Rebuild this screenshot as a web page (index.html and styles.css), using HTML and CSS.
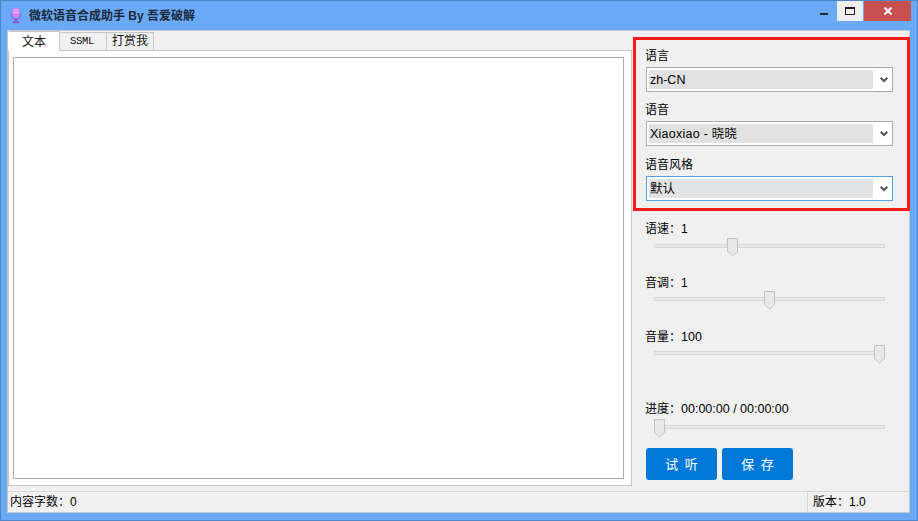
FILE: index.html
```html
<!DOCTYPE html>
<html lang="zh-CN">
<head>
<meta charset="utf-8">
<title>微软语音合成助手</title>
<link rel="stylesheet" href="styles.css">
</head>
<body>
<div class="window">
  <header class="titlebar">
    <svg class="app-icon" width="12" height="17" viewBox="0 0 14 20">
      <rect x="3" y="1" width="8" height="11" rx="4" fill="#e07ff0"/>
      <rect x="4" y="3" width="6" height="1" fill="#f6d8fa"/>
      <rect x="4" y="6" width="6" height="1" fill="#f6d8fa"/>
      <path d="M1.500 8v1a5.500 5.500 0 0 0 11 0V8" fill="none" stroke="#a855d8" stroke-width="1.300"/>
      <rect x="6" y="14" width="2" height="3" fill="#8a4fc0"/>
      <rect x="3" y="17" width="8" height="2" fill="#8a4fc0"/>
    </svg>
    <span class="title">微软语音合成助手 By 吾爱破解</span>
    <div class="caption">
      <div class="cap cap-min"><i></i></div>
      <div class="cap cap-max"><i></i></div>
      <div class="cap cap-close">
        <svg width="8" height="8" viewBox="0 0 8 8"><path d="M0.500 0.500L7.500 7.500M7.500 0.500L0.500 7.500" stroke="#fff" stroke-width="2"/></svg>
      </div>
    </div>
  </header>
  <div class="client">
    <div class="main">
      <section class="left">
        <div class="tabs">
          <div class="tab active">文本</div>
          <div class="tab mono">SSML</div>
          <div class="tab reward">打赏我</div>
        </div>
        <div class="tab-page"><div class="textbox"></div></div>
      </section>
      <aside class="right">
        <div class="group">
          <label class="lbl">语言</label>
          <div class="combo"><span class="val">zh-CN</span><svg class="chev" width="8" height="6" viewBox="0 0 8 6"><path d="M.7.700L4 4l3.300-3.300" fill="none" stroke="#555" stroke-width="2"/></svg></div>
          <label class="lbl second">语音</label>
          <div class="combo"><span class="val wide">Xiaoxiao - 晓晓</span><svg class="chev" width="8" height="6" viewBox="0 0 8 6"><path d="M.7.700L4 4l3.300-3.300" fill="none" stroke="#555" stroke-width="2"/></svg></div>
          <label class="lbl second third">语音风格</label>
          <div class="combo focus"><span class="val">默认</span><svg class="chev" width="8" height="6" viewBox="0 0 8 6"><path d="M.7.700L4 4l3.300-3.300" fill="none" stroke="#555" stroke-width="2"/></svg></div>
        </div>
        <div class="sliders">
          <div class="field f1"><div class="lbl">语速：1</div><div class="slider"><div class="thumb" style="left:72px"><svg width="12" height="19" viewBox="0 0 12 19"><path d="M.5.5h10v13l-5 4.500-5-4.500z" fill="#e8e8e8" stroke="#c2c2c2"/></svg></div></div></div>
          <div class="field f2"><div class="lbl">音调：1</div><div class="slider"><div class="thumb" style="left:109px"><svg width="12" height="19" viewBox="0 0 12 19"><path d="M.5.5h10v13l-5 4.500-5-4.500z" fill="#e8e8e8" stroke="#c2c2c2"/></svg></div></div></div>
          <div class="field f3"><div class="lbl">音量：<span class="num">100</span></div><div class="slider"><div class="thumb" style="left:219px"><svg width="12" height="19" viewBox="0 0 12 19"><path d="M.5.5h10v13l-5 4.500-5-4.500z" fill="#e8e8e8" stroke="#c2c2c2"/></svg></div></div></div>
          <div class="field f4"><div class="lbl">进度：<span class="num">00:00:00 / 00:00:00</span></div><div class="slider"><div class="thumb" style="left:-1px"><svg width="12" height="19" viewBox="0 0 12 19"><path d="M.5.5h10v13l-5 4.500-5-4.500z" fill="#e8e8e8" stroke="#c2c2c2"/></svg></div></div></div>
        </div>
        <div class="buttons">
          <button class="btn">试 听</button>
          <button class="btn">保 存</button>
        </div>
      </aside>
    </div>
    <footer class="status">
      <span class="count">内容字数：0</span>
      <span class="version">版本：1.0</span>
    </footer>
  </div>
</div>
</body>
</html>
```
FILE: styles.css
```css
* { box-sizing: border-box; }
html, body { margin: 0; padding: 0; }
body {
  width: 918px; height: 521px; overflow: hidden;
  font-family: "Liberation Sans", "Noto Sans CJK SC", sans-serif;
  font-size: 12px; color: #000;
}
.window {
  width: 918px; height: 521px;
  background: #69a9f5;
  border: 1px solid #4f86c8;
  display: flex; flex-direction: column;
}
.titlebar {
  height: 29px; flex: none;
  display: flex; align-items: flex-start;
  padding-left: 9px;
}
.app-icon { margin-top: 6px; }
.title { margin: 7px 0 0 7px; font-size: 12px; font-weight: bold; color: #1a2a3c; line-height: 16px; }
.caption { margin-left: auto; display: flex; margin-right: 6px; }
.cap { height: 20px; display: flex; align-items: center; justify-content: center; }
.cap-min { width: 27px; }
.cap-min i { display: block; width: 8px; height: 2px; background: #1c2530; margin-top: 6px; }
.cap-max { width: 26px; background: #eeeeee; }
.cap-max i { display: block; width: 10px; height: 8px; border: 1px solid #222; border-top-width: 2px; }
.cap-close { width: 47px; background: #c75050; margin-left: 1px; }
.client {
  flex: 1; margin: 0 7px 7px 6px;
  background: #f0f0f0;
  border: 1px solid #c4c8cc;
  display: flex; flex-direction: column;
  min-height: 0;
}
.main { flex: 1; display: flex; min-height: 0; }
.left { width: 624px; flex: none; display: flex; flex-direction: column; padding-bottom: 5px; }
.tabs { display: flex; height: 19px; flex: none; align-items: flex-end; }
.tab {
  height: 18px; line-height: 16px; text-align: center;
  background: #f0f0f0;
  border: 1px solid #c8c8c8; border-bottom: none;
  margin-left: -1px; font-size: 12px; color: #111;
}
.tab.mono { font-family: "Liberation Mono", monospace; font-size: 10.500px; letter-spacing: -.3px; width: 48px; padding-right: 2px; }
.tab.reward { width: 48px; }
.tab.active {
  height: 20px; width: 52px; background: #fff; margin-left: 0; position: relative; z-index: 1; margin-bottom: -1px; line-height: 21px;
  border-left-color: #fff;
}
.tab-page {
  flex: 1; background: #fff; border: 1px solid #c4c4c4; padding: 6px 7px 6px 4px; min-height: 0;
}
.textbox { height: 100%; background: #fff; border: 1px solid #ababab; }
.right { flex: 1; padding: 6px 0 0 1px; }
.group {
  width: 277px; height: 174px;
  border: 3px solid #ff1a1a;
  padding: 8px 0 0 10px;
}
.lbl { display: block; font-size: 12px; line-height: 17px; color: #000; margin-left: -1px; }
.lbl.second { margin-top: 10px; }
.lbl.third { margin-top: 11px; }
.combo {
  height: 25px; width: 247px; margin-top: 2px;
  background: #fff; border: 1px solid #ababab;
  padding: 2px; display: flex; align-items: stretch;
  position: relative;
}
.combo.focus { border-color: #569de5; }
.val { width: 224px; background: #e1e1e1; padding-left: 1px; line-height: 20px; font-size: 12.500px; }
.val.wide { letter-spacing: .25px; }
.combo.focus .val { background: #e2e3e5; }
.chev { position: absolute; right: 4px; top: 9px; }
.num { font-size: 12.500px; }
.sliders { padding-left: 12px; }
.field .lbl { line-height: 16px; margin-left: 0; }
.f1 { margin-top: 10px; }
.f2 { margin-top: 27px; }
.f3 { margin-top: 28px; }
.f4 { margin-top: 46px; }
.slider { position: relative; height: 4px; width: 231px; margin: 6px 0 0 9px; background: #e7eaea; border: 1px solid #d6d6d6; }
.f1 .slider { margin-top: 7px; }
.f4 .slider { margin-top: 8px; }
.thumb { position: absolute; top: -7px; height: 19px; line-height: 0; }
.buttons { display: flex; gap: 5px; margin: 19px 0 0 13px; }
.btn {
  width: 71px; height: 32px; padding: 0 0 1px;
  background: #0078d7; color: #fff; border: none; border-radius: 3px;
  font-family: inherit; font-size: 13px; word-spacing: 3px;
}
.status {
  height: 21px; flex: none;
  border-top: 1px solid #d6d6d6;
  display: flex; align-items: center; justify-content: space-between;
  line-height: 20px;
}
.count { padding-left: 2px; }
.version { width: 102px; height: 20px; border-left: 1px solid #d6d6d6; padding-left: 5px; }
```
